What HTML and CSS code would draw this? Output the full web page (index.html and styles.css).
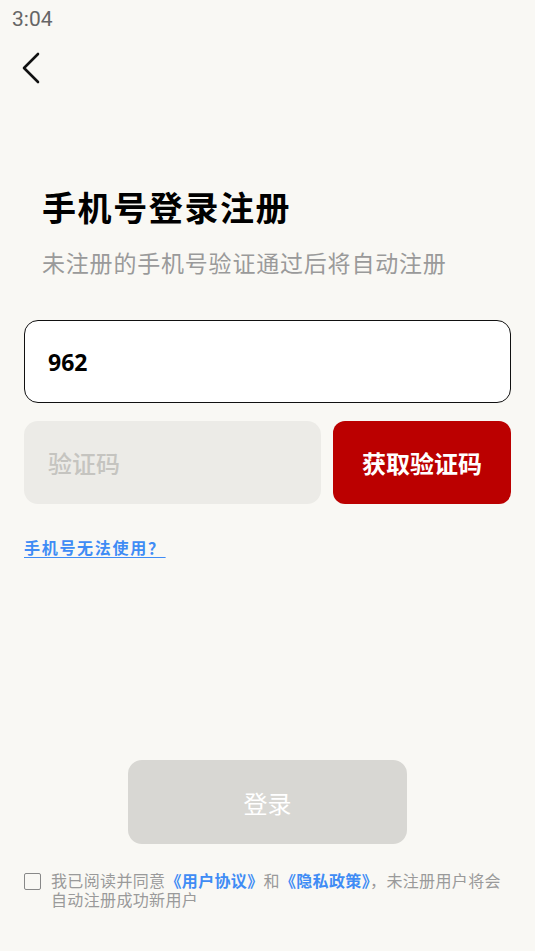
FILE: index.html
```html
<!DOCTYPE html>
<html lang="zh-CN">
<head>
<meta charset="utf-8">
<title>手机号登录注册</title>
<link rel="stylesheet" href="styles.css">
</head>
<body>
<div class="page">
  <div class="status">3:04</div>
  <div class="nav">
    <svg class="back" width="24" height="34" viewBox="0 0 24 34" aria-hidden="true">
      <path d="M17 2 L3 16 L17 30" fill="none" stroke="#111" stroke-width="2.6" stroke-linecap="round" stroke-linejoin="round"/>
    </svg>
  </div>
  <div class="content">
    <h1 class="title">手机号登录注册</h1>
    <p class="subtitle">未注册的手机号验证通过后将自动注册</p>
    <div class="phone">962</div>
    <div class="code-row">
      <div class="code-input">验证码</div>
      <div class="code-btn">获取验证码</div>
    </div>
    <a class="help" href="#">手机号无法使用？</a>
  </div>
  <div class="spacer"></div>
  <div class="login-wrap"><div class="login">登录</div></div>
  <div class="agree">
    <span class="check"></span>
    <p class="agree-text">我已阅读并同意<span class="link">《用户协议》</span>和<span class="link">《隐私政策》</span>，未注册用户将会自动注册成功新用户</p>
  </div>
</div>
</body>
</html>
```
FILE: styles.css
```css
* { box-sizing: border-box; }
html, body { margin: 0; padding: 0; }
body {
  background: #f9f8f4;
  font-family: "Noto Sans CJK SC", "Noto Sans", Roboto, sans-serif;
}
.page {
  width: 535px;
  height: 951px;
  display: flex;
  flex-direction: column;
}
.status {
  height: 38px;
  padding-left: 12px;
  font-family: Roboto, "Noto Sans", sans-serif;
  font-size: 21px;
  font-weight: 400;
  line-height: 38px;
  color: #666;
}
.nav {
  height: 40px;
  padding-left: 21px;
  display: flex;
  align-items: flex-start;
}
.back { display: block; margin-top: 14px; }
.content {
  padding: 0 24px;
  display: flex;
  flex-direction: column;
  align-items: flex-start;
}
.title {
  margin: 109px 0 0 18px;
  font-size: 34px;
  line-height: 40px;
  font-weight: 700;
  color: #000;
  letter-spacing: 1.6px;
}
.subtitle {
  margin: 20px 0 0 18px;
  font-size: 23px;
  line-height: 30px;
  color: #9a9a9a;
  letter-spacing: 0.8px;
}
.phone {
  margin-top: 43px;
  width: 487px;
  height: 83px;
  background: #fff;
  border: 1.5px solid #111;
  border-radius: 14px;
  padding-left: 23px;
  display: flex;
  align-items: center;
  font-family: "Noto Sans", sans-serif;
  font-size: 23px;
  font-weight: 700;
  color: #000;
}
.code-row {
  margin-top: 18px;
  width: 487px;
  height: 83px;
  display: flex;
  gap: 12px;
}
.code-input {
  flex: 0 0 297px;
  background: #ecebe7;
  border-radius: 14px;
  padding-left: 24px;
  display: flex;
  align-items: center;
  font-size: 24px;
  font-weight: 500;
  color: #c5c4c0;
}
.code-btn {
  flex: 1;
  background: #bb0000;
  border-radius: 12px;
  display: flex;
  align-items: center;
  justify-content: center;
  font-size: 24px;
  font-weight: 700;
  color: #fff;
}
.help {
  margin-top: 33px;
  font-size: 16px;
  line-height: 20px;
  font-weight: 700;
  color: #3f8cf5;
  text-decoration: underline;
  text-underline-offset: 3px;
  letter-spacing: 1.7px;
}
.spacer { flex: 1; }
.login-wrap {
  display: flex;
  justify-content: center;
}
.login {
  width: 279px;
  height: 84px;
  background: #d8d7d3;
  border-radius: 14px;
  display: flex;
  align-items: center;
  justify-content: center;
  font-size: 24px;
  color: #fff;
}
.agree {
  margin-top: 27px;
  margin-bottom: 42px;
  padding: 0 24px;
  display: flex;
  gap: 10px;
  align-items: flex-start;
}
.check {
  flex: 0 0 17px;
  height: 17px;
  margin-top: 2px;
  border: 1.5px solid #888;
  border-radius: 2px;
}
.agree-text {
  margin: 0;
  width: 464px;
  font-size: 16px;
  line-height: 19px;
  letter-spacing: 0.35px;
  color: #9a9a9a;
}
.link { color: #3f8cf5; font-weight: 700; }
```
